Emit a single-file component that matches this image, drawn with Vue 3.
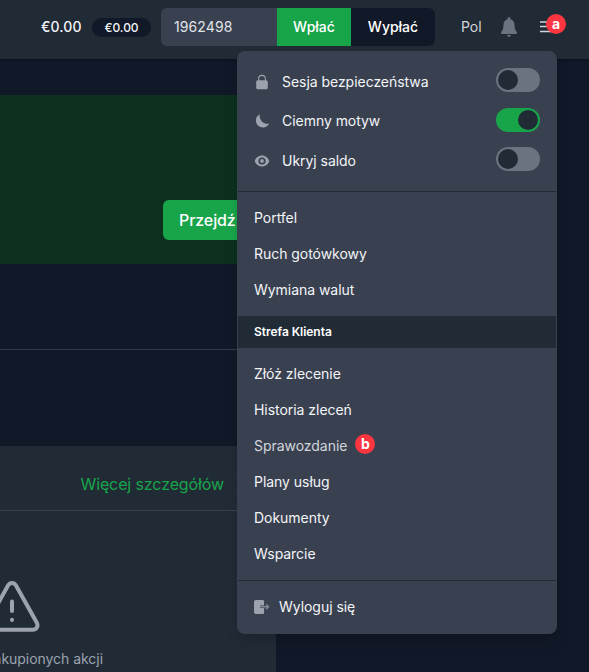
<script setup>
import { ref } from 'vue'

const toggles = ref([
  { label: 'Sesja bezpieczeństwa', icon: 'lock', on: false },
  { label: 'Ciemny motyw', icon: 'moon', on: true },
  { label: 'Ukryj saldo', icon: 'eye', on: false },
])
const wallet = ['Portfel', 'Ruch gotówkowy', 'Wymiana walut']
const client = [
  { label: 'Złóż zlecenie' },
  { label: 'Historia zleceń' },
  { label: 'Sprawozdanie', mark: 'b' },
  { label: 'Plany usług' },
  { label: 'Dokumenty' },
  { label: 'Wsparcie' },
]
</script>

<template>
  <div class="page">
    <header class="topbar">
      <span class="balance">€0.00</span>
      <span class="pill">€0.00</span>
      <div class="account">
        <span class="account-id">1962498</span>
        <button class="deposit">Wpłać</button>
        <button class="withdraw">Wypłać</button>
      </div>
      <span class="lang">Pol</span>
      <svg class="bell" viewBox="0 0 18 20">
        <path d="M9 .3c.9 0 1.500.6 1.500 1.500v.5c2.400.7 4 2.800 4 5.400 0 4 .9 5.800 2.300 7.300.7.800.2 2-.9 2H2.100c-1.100 0-1.600-1.200-.9-2C2.600 13.500 3.500 11.700 3.500 7.700c0-2.600 1.600-4.700 4-5.400v-.5C7.500.9 8.100.3 9 .3zM6.900 18h4.200c-.3 1.200-1.100 1.800-2.100 1.800S7.200 19.200 6.900 18z" />
      </svg>
      <div class="burger">
        <svg viewBox="0 0 16 12"><path d="M0 1h16M0 5.500h16M0 10.500h16" /></svg>
        <span class="mark mark-a">a</span>
      </div>
    </header>

    <main>
      <section class="banner">
        <button class="go">Przejdź</button>
      </section>
      <div class="rule"></div>
      <section class="card">
        <div class="card-head">
          <span>Więcej szczegółów</span>
          <svg viewBox="0 0 8 12"><path d="M1 1l5 5-5 5" /></svg>
        </div>
        <div class="empty">
          <svg class="warning" viewBox="0 0 56 52">
            <path d="M24 4.500 3.300 41.500C1.300 45.300 3.500 48.800 7.500 48.800h41c4 0 6.200-3.500 4.200-7.300L32 4.500c-2-3.300-6-3.300-8 0z" />
            <path d="M28 20.500v9.500M28 38.800v.1" />
          </svg>
          <p>akupionych akcji</p>
        </div>
      </section>
    </main>

    <nav class="menu">
      <div class="switches">
        <div v-for="t in toggles" :key="t.icon" class="switch-row">
          <svg v-if="t.icon === 'lock'" class="icon" viewBox="0 0 16 16">
            <path d="M4.100 6.300V4.700a3.900 3.900 0 0 1 7.800 0v1.600c1.200.1 1.900.8 1.900 1.700v5.400c0 1-.7 1.800-1.800 1.800H4c-1.100 0-1.800-.8-1.800-1.800V8c0-.9.700-1.600 1.900-1.700zm1.100 0h5.600V4.700a2.800 2.800 0 0 0-5.600 0z" />
          </svg>
          <svg v-else-if="t.icon === 'moon'" class="icon" viewBox="0 0 16 16">
            <path d="M5.800 1.200a8 8 0 0 0 9.300 9.500A7 7 0 1 1 5.800 1.200z" />
          </svg>
          <svg v-else class="icon" viewBox="0 0 16 16">
            <path fill-rule="evenodd" d="M8 2.500c3.500 0 6.100 2.300 7.300 5.500-1.200 3.200-3.800 5.500-7.300 5.500S1.900 11.200.7 8C1.900 4.800 4.500 2.500 8 2.500zm0 1.900a3.600 3.600 0 1 0 0 7.200 3.600 3.600 0 0 0 0-7.200z" />
            <circle cx="8" cy="8" r="1.900" />
          </svg>
          <span>{{ t.label }}</span>
          <button class="toggle" :class="{ on: t.on }" :aria-pressed="t.on" @click="t.on = !t.on"><i></i></button>
        </div>
      </div>
      <div class="links wallet">
        <a v-for="l in wallet" :key="l">{{ l }}</a>
      </div>
      <h3>Strefa Klienta</h3>
      <div class="links client">
        <a v-for="l in client" :key="l.label" :class="{ hover: l.mark }">{{ l.label }}<span v-if="l.mark" class="mark">{{ l.mark }}</span></a>
      </div>
      <div class="logout">
        <svg viewBox="0 0 16 14">
          <path d="M2 0h6.500c1 0 1.600.6 1.600 1.600v3.900H6v2.600h4.100v4.300c0 1-.6 1.600-1.600 1.600H2c-1.200 0-2-.8-2-2V2C0 .8.800 0 2 0z" />
          <path class="arrow" d="M6 6.800h8.200M12.200 4.500l2.300 2.300-2.300 2.300" />
        </svg>
        <span>Wyloguj się</span>
      </div>
    </nav>
  </div>
</template>

<style>
body { margin: 0; background: #111827; }
</style>

<style scoped>
* { box-sizing: border-box; }
.page {
  position: relative;
  width: 589px;
  height: 672px;
  overflow: hidden;
  background: #111827;
  color: #f3f4f6;
  font: 400 14px/20px Inter, sans-serif;
  letter-spacing: -.04px;
}
button { border: 0; padding: 0; color: #fff; font: inherit; cursor: pointer; }
.topbar {
  display: flex;
  align-items: center;
  height: 59px;
  padding: 0 0 5px 41px;
  background: #212b36;
  box-shadow: 0 1px 2px #0b101c;
}
.balance { width: 51px; font-weight: 500; letter-spacing: .1px; }
.pill {
  width: 59px;
  height: 19px;
  margin-right: 10px;
  border-radius: 10px;
  background: #111827;
  font-size: 12px;
  font-weight: 500;
  line-height: 20px;
  text-align: center;
}
.account {
  display: flex;
  width: 274px;
  height: 38px;
  border-radius: 6px;
  overflow: hidden;
  background: #394151;
  line-height: 38px;
}
.account-id { width: 116px; padding-left: 13px; color: #e0e3e7; letter-spacing: .1px; }
.deposit { width: 74px; background: #18a54a; font-weight: 500; }
.withdraw { width: 84px; background: #111827; font-weight: 500; }
.lang { width: 39px; margin-left: 26px; color: #d1d5db; }
.bell { width: 18px; height: 20px; margin-right: 22px; fill: #6b7280; }
.burger { position: relative; width: 16px; height: 12px; }
.burger svg { display: block; width: 16px; height: 12px; fill: none; stroke: #d1d5db; stroke-width: 1.300; }
.mark {
  display: inline-block;
  width: 20px;
  height: 20px;
  border-radius: 50%;
  background: #fb3640;
  color: #fff;
  font-size: 14px;
  font-weight: 700;
  line-height: 19px;
  text-align: center;
}
.mark-a { position: absolute; left: 6px; top: -7px; }
main { width: 540px; padding-top: 36px; }
.banner { height: 169px; padding: 105px 0 0 163px; background: #0d301e; }
.go {
  display: block;
  width: 180px;
  height: 40px;
  padding-left: 16px;
  border-radius: 6px;
  background: #18a54a;
  font-size: 16px;
  font-weight: 500;
  letter-spacing: -.1px;
  text-align: left;
}
.rule { height: 1px; margin: 85px 0 96px; background: #343c4b; }
.card { width: 276px; height: 226px; background: #212b36; }
.card-head {
  display: flex;
  align-items: center;
  justify-content: flex-end;
  gap: 12px;
  height: 65px;
  padding: 12px 32px 0 0;
  border-bottom: 1px solid #394151;
  color: #18a54a;
  font-size: 16px;
  letter-spacing: -.11px;
}
.card-head svg { width: 8px; height: 12px; fill: none; stroke: currentColor; stroke-width: 1.500; }
.empty {
  display: flex;
  flex-direction: column;
  align-items: center;
  width: 254px;
  margin-left: -115px;
  padding-top: 70px;
  color: #9ca3af;
}
.warning { width: 56px; height: 52px; fill: none; stroke: currentColor; stroke-width: 4; stroke-linecap: round; stroke-linejoin: round; }
.empty p { align-self: flex-end; margin: 16px 36px 0 0; white-space: nowrap; }

.menu {
  position: absolute;
  left: 237px;
  top: 51px;
  width: 320px;
  height: 583px;
  padding: 0 1px;
  border-radius: 8px;
  background: #394151;
  box-shadow: 0 10px 15px -3px rgba(0, 0, 0, .1), 0 4px 6px -2px rgba(0, 0, 0, .08);
}
.switches { height: 141px; padding: 11px 16px 0; border-bottom: 1px solid #212b36; }
.switch-row { display: flex; align-items: center; height: 39.500px; }
.switch-row span { flex: 1; margin-left: 12px; }
.icon { width: 16px; height: 16px; fill: #9ca3af; }
.toggle { width: 44px; height: 24px; padding: 2px; margin-top: -3px; border-radius: 12px; background: #6b7280; }
.toggle i { display: block; width: 20px; height: 20px; border-radius: 50%; background: #212b36; }
.toggle.on { background: #18a54a; }
.toggle.on i { margin-left: auto; }
.links { display: flex; flex-direction: column; padding: 8px 16px; }
.links a { display: flex; align-items: center; height: 36px; }
.links .hover { color: #d1d5db; }
.links .mark { margin: -4px 0 0 8px; }
.wallet { height: 124px; }
h3 { height: 32px; margin: 0; padding-left: 16px; background: #212b36; font-size: 12px; font-weight: 600; line-height: 32px; color: #fff; }
.client { height: 233px; border-bottom: 1px solid #212b36; }
.logout { display: flex; align-items: center; height: 52px; padding-left: 16px; }
.logout svg { width: 16px; height: 14px; margin-right: 9px; fill: #9ca3af; }
.logout .arrow { fill: none; stroke: #7f8795; stroke-width: 1.500; }
</style>
